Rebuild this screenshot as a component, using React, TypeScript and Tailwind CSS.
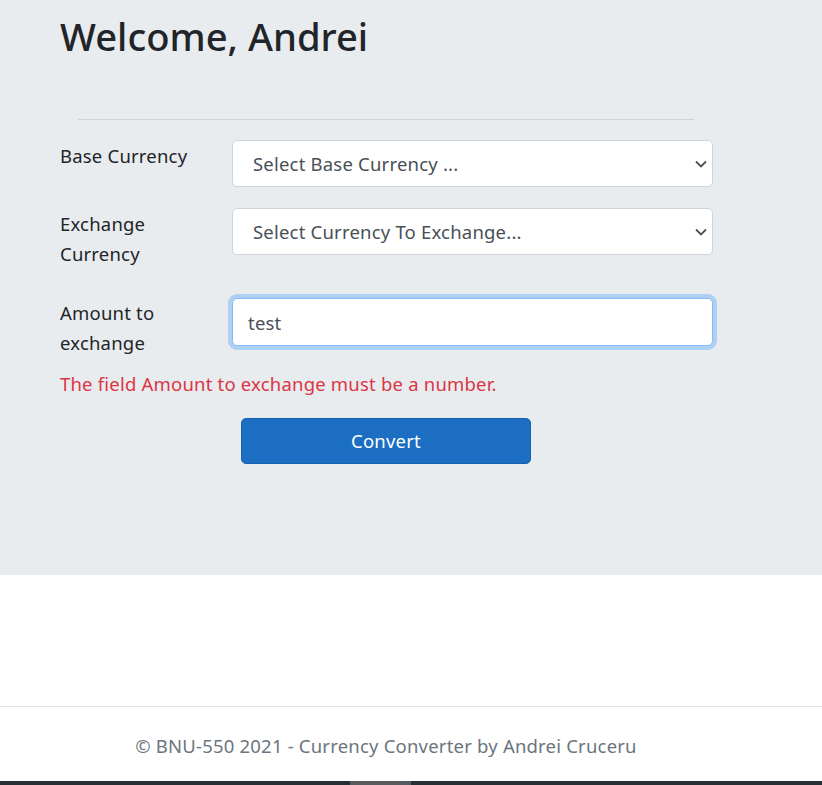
import React from "react";

const font = { fontFamily: '"Noto Sans", "Open Sans", sans-serif' };

function Chevron() {
  return (
    <svg
      className="pointer-events-none absolute right-[6px] top-1/2 -translate-y-1/2"
      width="12"
      height="8"
      viewBox="0 0 12 8"
      fill="none"
    >
      <path d="M1 1.5 L6 6.5 L11 1.5" stroke="#505050" strokeWidth="1.8" />
    </svg>
  );
}

function SelectBox({ label }: { label: string }) {
  return (
    <div className="relative w-[481px]">
      <select
        className="block h-[47px] w-full appearance-none rounded-[5px] border border-[#ced4da] bg-white pl-[20px] pr-8 text-[18.5px] leading-[30px] tracking-[0.2px] text-[#495057] outline-none"
        style={font}
        defaultValue=""
      >
        <option value="">{label}</option>
      </select>
      <Chevron />
    </div>
  );
}

export default function App() {
  return (
    <div
      className="flex min-h-[785px] w-[822px] flex-col bg-white text-[18.5px] leading-[30px] tracking-[0.2px] text-[#212529]"
      style={font}
    >
      <section className="h-[575px] bg-[#e9ecef] pl-[60px]">
        <h1 className="mt-[13px] text-[38.2px] font-medium leading-[47px] tracking-normal text-[#212529]">Welcome, Andrei</h1>
        <div className="ml-[18px] mt-[59px] h-px w-[616px] bg-[#cfd3d7]" />
        <form className="mt-[20px] flex flex-col">
          <div className="flex items-start">
            <label className="mt-[1px] w-[172px]">Base Currency</label>
            <SelectBox label="Select Base Currency ..." />
          </div>
          <div className="mt-[21px] flex items-start">
            <label className="mt-[1px] w-[172px]">
              Exchange
              <br />
              Currency
            </label>
            <SelectBox label="Select Currency To Exchange..." />
          </div>
          <div className="mt-[29px] flex items-start">
            <label className="w-[172px]">
              Amount to
              <br />
              exchange
            </label>
            <input
              className="h-[48px] w-[481px] rounded-[5px] border border-[#80bdff] bg-white pl-[15px] text-[18.5px] leading-[30px] tracking-[0.2px] text-[#495057] shadow-[0_0_0_4px_rgba(0,123,255,0.25)] outline-none"
              style={font}
              defaultValue="test"
              readOnly
            />
          </div>
          <div className="mt-[11px] text-[#dc3545]">The field Amount to exchange must be a number.</div>
          <button
            type="button"
            className="ml-[181px] mt-[19px] h-[46px] w-[290px] rounded-[5px] border border-[#1861ac] bg-[#1b6ec2] text-[18.5px] leading-[30px] tracking-[0.2px] text-white"
            style={font}
          >
            Convert
          </button>
        </form>
      </section>
      <div className="h-[131px]" />
      <footer className="border-t border-[#dee2e6]">
        <div className="w-[772px] pt-[24px] text-center text-[#6c757d]">
          © BNU-550 2021 - Currency Converter by Andrei Cruceru
        </div>
        <div className="h-[20px]" />
      </footer>
      <div className="flex h-[4px] w-full">
        <div className="w-[350px] bg-[#243034]" />
        <div className="w-[61px] bg-[#575b5e]" />
        <div className="flex-1 bg-[#243034]" />
      </div>
    </div>
  );
}
